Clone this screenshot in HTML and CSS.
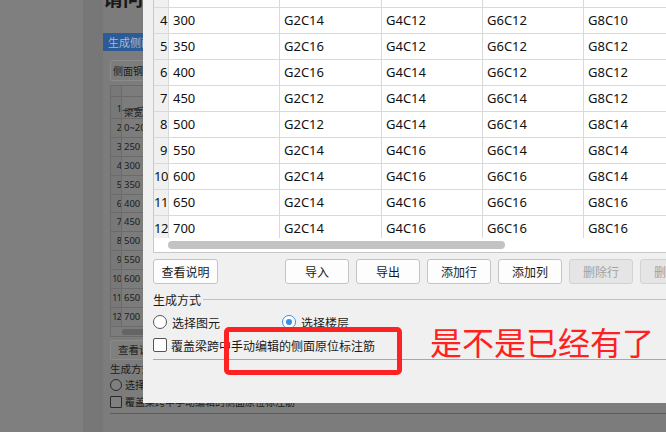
FILE: index.html
```html
<!DOCTYPE html>
<html lang="zh-CN">
<head>
    <meta charset="UTF-8">
    <meta name="viewport" content="width=device-width, initial-scale=1.0">
    <title>侧面钢筋配置</title>
    <link rel="stylesheet" href="styles.css">
</head>
<body>
    <!-- pagina dietro la finestra, oscurata -->
    <div class="desk">
        <div class="side"></div>
        <div class="gutter"></div>
        <div class="page">
            <h1 class="page-title">请问这个功能</h1>
            <div class="tab-bar">生成侧面钢筋</div>
            <div class="page-body">
                <div class="field">侧面钢筋配置</div>
                <div class="mini-grid">
                    <div class="mini-row head0"><span class="mini-num"></span><span class="mini-cell"></span></div>
                    <div class="mini-row head1"><span class="mini-num">1</span><span class="mini-cell diag">梁宽</span></div>
                    <div class="mini-row"><span class="mini-num">2</span><span class="mini-cell">0~200</span></div>
                    <div class="mini-row"><span class="mini-num">3</span><span class="mini-cell">250</span></div>
                    <div class="mini-row"><span class="mini-num">4</span><span class="mini-cell">300</span></div>
                    <div class="mini-row"><span class="mini-num">5</span><span class="mini-cell">350</span></div>
                    <div class="mini-row"><span class="mini-num">6</span><span class="mini-cell">400</span></div>
                    <div class="mini-row"><span class="mini-num">7</span><span class="mini-cell">450</span></div>
                    <div class="mini-row"><span class="mini-num">8</span><span class="mini-cell">500</span></div>
                    <div class="mini-row"><span class="mini-num">9</span><span class="mini-cell">550</span></div>
                    <div class="mini-row"><span class="mini-num">10</span><span class="mini-cell">600</span></div>
                    <div class="mini-row"><span class="mini-num">11</span><span class="mini-cell">650</span></div>
                    <div class="mini-row"><span class="mini-num">12</span><span class="mini-cell">700</span></div>
                    <div class="mini-scroll"><span></span></div>
                </div>
                <div class="mini-btn">查看说明</div>
                <div class="mini-label">生成方式</div>
                <div class="mini-opt"><span class="mini-radio"></span>选择图元</div>
                <div class="mini-opt"><span class="mini-check"></span>覆盖梁跨中手动编辑的侧面原位标注筋</div>
                <div class="mini-rule"></div>
            </div>
        </div>
    </div>

    <!-- finestra di dialogo -->
    <div class="dialog">
        <div class="grid-box">
            <div class="grid-view" id="grid"></div>
            <div class="hscroll"><div class="thumb"></div></div>
        </div>

        <div class="toolbar">
            <button class="btn first">查看说明</button>
            <button class="btn">导入</button>
            <button class="btn">导出</button>
            <button class="btn">添加行</button>
            <button class="btn">添加列</button>
            <button class="btn" disabled>删除行</button>
            <button class="btn" disabled>删除列</button>
        </div>

        <div class="group-head"><span>生成方式</span><i></i></div>
        <div class="opts">
            <label class="opt"><span class="radio"></span>选择图元</label>
            <label class="opt second"><span class="radio on"></span>选择楼层</label>
        </div>
        <div class="opts">
            <label class="opt"><span class="check"></span>覆盖梁跨中手动编辑的侧面原位标注筋</label>
        </div>
        <div class="rule"></div>
    </div>

    <div class="mark-box"></div>
    <div class="mark-text">是不是已经有了</div>

    <script>
        const rows = [
            [3, '250', 'G2C12', 'G4C12', 'G6C12', 'G8C10'],
            [4, '300', 'G2C14', 'G4C12', 'G6C12', 'G8C10'],
            [5, '350', 'G2C16', 'G4C12', 'G6C12', 'G8C12'],
            [6, '400', 'G2C16', 'G4C14', 'G6C12', 'G8C12'],
            [7, '450', 'G2C12', 'G4C14', 'G6C14', 'G8C12'],
            [8, '500', 'G2C12', 'G4C14', 'G6C14', 'G8C14'],
            [9, '550', 'G2C14', 'G4C16', 'G6C14', 'G8C14'],
            [10, '600', 'G2C14', 'G4C16', 'G6C16', 'G8C14'],
            [11, '650', 'G2C14', 'G4C16', 'G6C16', 'G8C16'],
            [12, '700', 'G2C14', 'G4C16', 'G6C16', 'G8C16']
        ];

        // costruire le righe della tabella
        const grid = document.getElementById('grid');
        rows.forEach(r => {
            const row = document.createElement('div');
            row.className = 'row';
            r.forEach((val, i) => {
                const c = document.createElement('div');
                c.className = i === 0 ? 'cell num' : 'cell';
                c.textContent = val;
                row.appendChild(c);
            });
            const extra = document.createElement('div');
            extra.className = 'cell';
            row.appendChild(extra);
            grid.appendChild(row);
        });
    </script>
</body>
</html>
```

FILE: styles.css
```css
body {
    margin: 0;
    padding: 0;
    width: 666px;
    height: 432px;
    overflow: hidden;
    position: relative;
    font-family: 'Noto Sans', 'Noto Sans CJK SC', sans-serif;
    font-size: 12px;
    color: #1a1a1a;
    background: #7b7c7b;
}

/* ---- pagina oscurata ---- */
.desk {
    display: flex;
    height: 432px;
}

.side {
    width: 83px;
    background: #7e7f7e;
}

.gutter {
    width: 20px;
    background: #767776;
}

.page {
    flex: 1;
    background: #7b7c7b;
    color: #1c1c1c;
    min-width: 0;
}

.page-title {
    margin: -12px 0 0 0;
    font-size: 20px;
    line-height: 20px;
    font-weight: bold;
    white-space: nowrap;
    font-family: 'Noto Sans CJK SC', sans-serif;
    color: #181818;
}

.tab-bar {
    margin-top: 25px;
    height: 18px;
    line-height: 18px;
    padding-left: 5px;
    background: #2c5b97;
    color: #a9b9cf;
    font-size: 11px;
    white-space: nowrap;
    font-family: 'Noto Sans CJK SC', sans-serif;
}

.page-body {
    padding-left: 7px;
}

.field {
    margin-top: 9px;
    height: 19px;
    line-height: 19px;
    border: 1px solid #8a8b8a;
    border-radius: 2px;
    padding-left: 2px;
    font-size: 10px;
    white-space: nowrap;
    font-family: 'Noto Sans CJK SC', sans-serif;
}

.mini-grid {
    margin-top: 4px;
    border: 1px solid #6a6b6a;
    border-right: none;
}

.mini-row {
    display: flex;
    height: 18.9px;
    border-bottom: 1px solid #6a6b6a;
    box-sizing: border-box;
    font-size: 9.5px;
}

.mini-row.head0 {
    height: 11px;
}

.mini-row.head1 {
    height: 22px;
}

.mini-num {
    width: 11px;
    flex: none;
    background: #777877;
    border-right: 1px solid #6a6b6a;
    text-align: right;
    line-height: 18px;
    box-sizing: border-box;
    letter-spacing: -0.8px;
    font-size: 9px;
    overflow: hidden;
}

.head1 .mini-num {
    line-height: 24px;
}

.mini-cell {
    flex: 1;
    padding-left: 2px;
    line-height: 18px;
    white-space: nowrap;
}

.mini-cell.diag {
    line-height: 30px;
    font-family: 'Noto Sans CJK SC', sans-serif;
    background: linear-gradient(to bottom right, transparent 48%, #3a3a3a 49%, #3a3a3a 52%, transparent 53%) no-repeat 0 0 / 70px 14px;
}

.mini-scroll {
    height: 9px;
    padding: 2px 0 0 11px;
    box-sizing: border-box;
}

.mini-scroll span {
    display: block;
    height: 6px;
    border-radius: 3px;
    background: #636463;
}

.mini-btn {
    margin-top: 3px;
    height: 18px;
    line-height: 18px;
    width: 60px;
    border: 1px solid #8a8b8a;
    border-radius: 2px;
    padding-left: 7px;
    background: #7e7f7e;
    font-size: 10.5px;
    font-family: 'Noto Sans CJK SC', sans-serif;
}

.mini-label {
    margin-top: 2px;
    height: 14px;
    line-height: 14px;
    font-size: 10.5px;
    font-family: 'Noto Sans CJK SC', sans-serif;
}

.mini-opt {
    margin-top: 1px;
    height: 16px;
    display: flex;
    align-items: center;
    font-size: 10px;
    white-space: nowrap;
    font-family: 'Noto Sans CJK SC', sans-serif;
}

.mini-radio,
.mini-check {
    width: 10px;
    height: 10px;
    flex: none;
    border: 1px solid #2a2a2a;
    border-radius: 50%;
    background: #7e7f7e;
    margin-right: 3px;
}

.mini-check {
    border-radius: 1px;
}

.mini-rule {
    margin-top: 3px;
    border-top: 1px solid #5a5b5a;
}

/* ---- finestra ---- */
.dialog {
    position: absolute;
    left: 143px;
    top: 0;
    width: 560px;
    height: 403px;
    overflow: hidden;
    background: #f0f0f0;
    padding-left: 10px;
    box-sizing: border-box;
}

.grid-box {
    margin-top: -19px;
    background: #fff;
    border: 1px solid #c8c8c8;
    border-right: none;
}

.grid-view {
    height: 256px;
    overflow: hidden;
}

.row {
    display: grid;
    grid-template-columns: 15px 111px 102px 101px 101px 101px 101px;
    height: 26px;
}

.cell {
    border-right: 1px solid #d9d9d9;
    border-bottom: 1px solid #d9d9d9;
    padding-left: 4px;
    line-height: 25px;
    font-size: 13px;
    color: #111;
    white-space: nowrap;
    overflow: hidden;
}

.cell.num {
    background: #f0f0f0;
    padding: 0 1px 0 0;
    text-align: right;
    letter-spacing: -0.5px;
}

.hscroll {
    height: 14px;
    padding: 3px 0 0 14px;
    box-sizing: border-box;
}

.thumb {
    width: 337px;
    height: 8px;
    border-radius: 4px;
    background: #c3c3c3;
}

.toolbar {
    margin-top: 6px;
    display: flex;
}

.btn {
    width: 64px;
    height: 25px;
    margin: 0 7px 0 0;
    padding: 0;
    flex: none;
    border: 1px solid #c4c4c4;
    border-radius: 3px;
    background: #fdfdfd;
    font-family: 'Noto Sans CJK SC', sans-serif;
    font-size: 12px;
    color: #1a1a1a;
}

.btn.first {
    width: 65px;
    margin-right: 67px;
}

.btn:disabled {
    background: #e5e5e5;
    border-color: #d2d2d2;
    color: #a2a2a2;
}

.group-head {
    margin-top: 8px;
    height: 14px;
    display: flex;
    align-items: center;
    font-family: 'Noto Sans CJK SC', sans-serif;
}

.group-head i {
    flex: 1;
    margin-left: 2px;
    border-top: 1px solid #c2c2c2;
}

.opts {
    margin-top: 8px;
    height: 16px;
    display: flex;
    font-family: 'Noto Sans CJK SC', sans-serif;
}

.opts + .opts {
    margin-top: 7px;
}

.opt {
    display: flex;
    align-items: center;
    white-space: nowrap;
}

.opt.second {
    margin-left: 62px;
}

.radio,
.check {
    width: 14px;
    height: 14px;
    box-sizing: border-box;
    border: 1px solid #555;
    border-radius: 50%;
    background: #fff;
    margin-right: 5px;
    display: flex;
    justify-content: center;
    align-items: center;
}

.radio.on {
    border-color: #3a8ee6;
}

.radio.on::after {
    content: '';
    width: 6px;
    height: 6px;
    border-radius: 50%;
    background: #3a8ee6;
}

.check {
    border-radius: 2px;
    margin-right: 4px;
}

.rule {
    margin-top: 6px;
    border-top: 1px solid #a8a8a8;
}

/* ---- annotazione rossa ---- */
.mark-box {
    position: absolute;
    left: 224px;
    top: 327px;
    width: 178px;
    height: 48px;
    box-sizing: border-box;
    border: 5px solid #ff2222;
    border-radius: 5px;
}

.mark-text {
    position: absolute;
    left: 430px;
    top: 325px;
    font-family: 'Noto Sans CJK SC', sans-serif;
    font-size: 32px;
    line-height: 32px;
    color: #ff2020;
    white-space: nowrap;
}
```
